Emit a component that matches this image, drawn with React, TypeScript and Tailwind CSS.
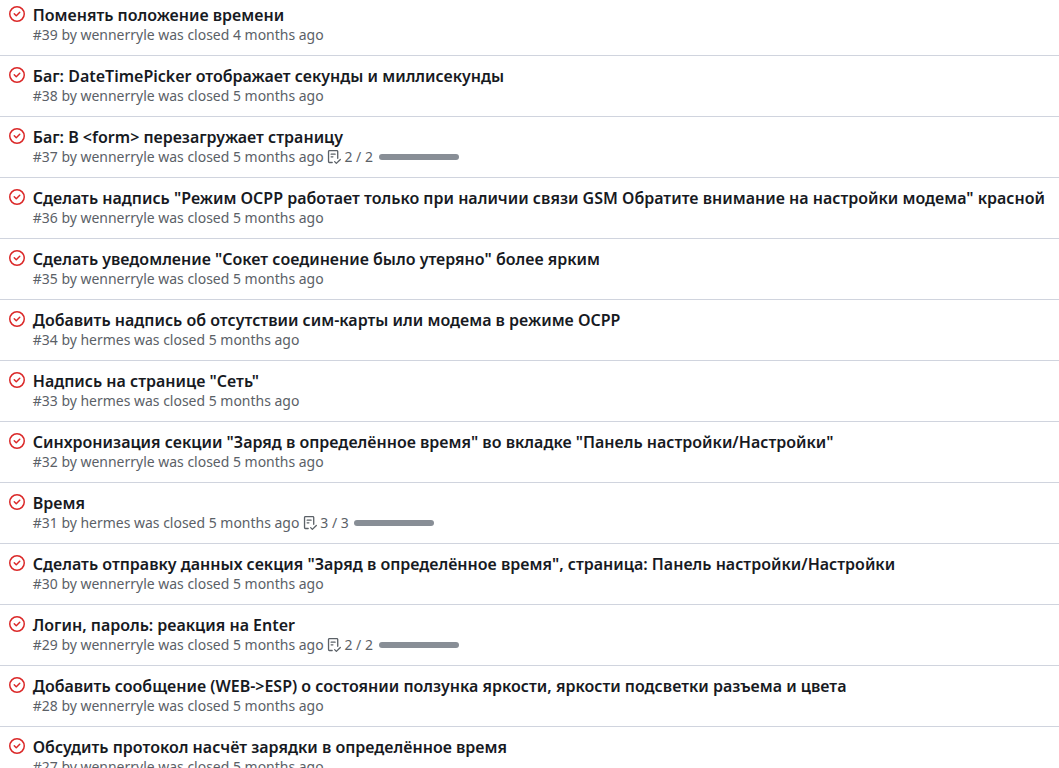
import React from "react";

type Issue = { id: number; title: string; author: string; age: number; tasks?: number };

const issues: Issue[] = [
  { id: 39, title: "Поменять положение времени", author: "wennerryle", age: 4 },
  { id: 38, title: "Баг: DateTimePicker отображает секунды и миллисекунды", author: "wennerryle", age: 5 },
  { id: 37, title: "Баг: В <form> перезагружает страницу", author: "wennerryle", age: 5, tasks: 2 },
  { id: 36, title: 'Сделать надпись "Режим OCPP работает только при наличии связи GSM Обратите внимание на настройки модема" красной', author: "wennerryle", age: 5 },
  { id: 35, title: 'Сделать уведомление "Сокет соединение было утеряно" более ярким', author: "wennerryle", age: 5 },
  { id: 34, title: "Добавить надпись об отсутствии сим-карты или модема в режиме OCPP", author: "hermes", age: 5 },
  { id: 33, title: 'Надпись на странице "Сеть"', author: "hermes", age: 5 },
  { id: 32, title: 'Синхронизация секции "Заряд в определённое время" во вкладке "Панель настройки/Настройки"', author: "wennerryle", age: 5 },
  { id: 31, title: "Время", author: "hermes", age: 5, tasks: 3 },
  { id: 30, title: 'Сделать отправку данных секция "Заряд в определённое время", страница: Панель настройки/Настройки', author: "wennerryle", age: 5 },
  { id: 29, title: "Логин, пароль: реакция на Enter", author: "wennerryle", age: 5, tasks: 2 },
  { id: 28, title: "Добавить сообщение (WEB->ESP) о состоянии ползунка яркости, яркости подсветки разъема и цвета", author: "wennerryle", age: 5 },
  { id: 27, title: "Обсудить протокол насчёт зарядки в определённое время", author: "wennerryle", age: 5 },
];

function ClosedIcon() {
  return (
    <svg viewBox="0 0 16 16" className="size-4 shrink-0 fill-[#db2828]">
      <path d="M11.28 6.78a.75.75 0 0 0-1.06-1.06L7.25 8.69 5.78 7.22a.75.75 0 0 0-1.06 1.06l2 2a.75.75 0 0 0 1.06 0l3.5-3.5Z" />
      <path d="M16 8A8 8 0 1 1 0 8a8 8 0 0 1 16 0Zm-1.5 0a6.5 6.5 0 1 0-13 0 6.5 6.5 0 0 0 13 0Z" />
    </svg>
  );
}

function ChecklistIcon() {
  return (
    <svg viewBox="0 0 16 16" className="size-[14px] shrink-0 fill-current">
      <path d="M2.5 1.75v11.5c0 .138.112.25.25.25h3.17a.75.75 0 0 1 0 1.5H2.75A1.75 1.75 0 0 1 1 13.25V1.75C1 .784 1.784 0 2.75 0h8.5C12.216 0 13 .784 13 1.75v7.736a.75.75 0 0 1-1.5 0V1.75a.25.25 0 0 0-.25-.25h-8.5a.25.25 0 0 0-.25.25Zm13.274 9.537-4.557 4.45a.75.75 0 0 1-1.055-.008l-1.943-1.95a.75.75 0 0 1 1.062-1.058l1.419 1.425 4.026-3.932a.75.75 0 1 1 1.048 1.074ZM4.75 4h4.5a.75.75 0 0 1 0 1.5h-4.5a.75.75 0 0 1 0-1.5ZM4 7.75A.75.75 0 0 1 4.75 7h2a.75.75 0 0 1 0 1.5h-2A.75.75 0 0 1 4 7.75Z" />
    </svg>
  );
}

export default function App() {
  return (
    <main className="h-[768px] overflow-hidden bg-white font-['Noto_Sans',sans-serif]">
      {issues.map((issue) => (
        <article key={issue.id} className="flex h-[61px] gap-[7.75px] border-b border-[#d0d4de] pt-[6px] pl-[9px] whitespace-nowrap [&:first-child]:h-14 [&:not(:first-child)]:pt-[11px]">
          <ClosedIcon />
          <div className="flex flex-col">
            <h2 className="h-[19px] text-[16px] leading-[18px] font-semibold text-[#171a1f]">{issue.title}</h2>
            <div className="flex h-5 items-center text-[13.97px] leading-5 text-[#5b6167]">
              <span>#{issue.id} by {issue.author} was closed {issue.age} months ago</span>
              {issue.tasks && (
                <>
                  <span className="ml-[3.7px] flex items-center gap-[3.2px]"><ChecklistIcon />{issue.tasks} / {issue.tasks}</span>
                  <span className="ml-[5.65px] h-[6px] w-20 rounded-[3px] bg-[#888e96]" />
                </>
              )}
            </div>
          </div>
        </article>
      ))}
    </main>
  );
}
